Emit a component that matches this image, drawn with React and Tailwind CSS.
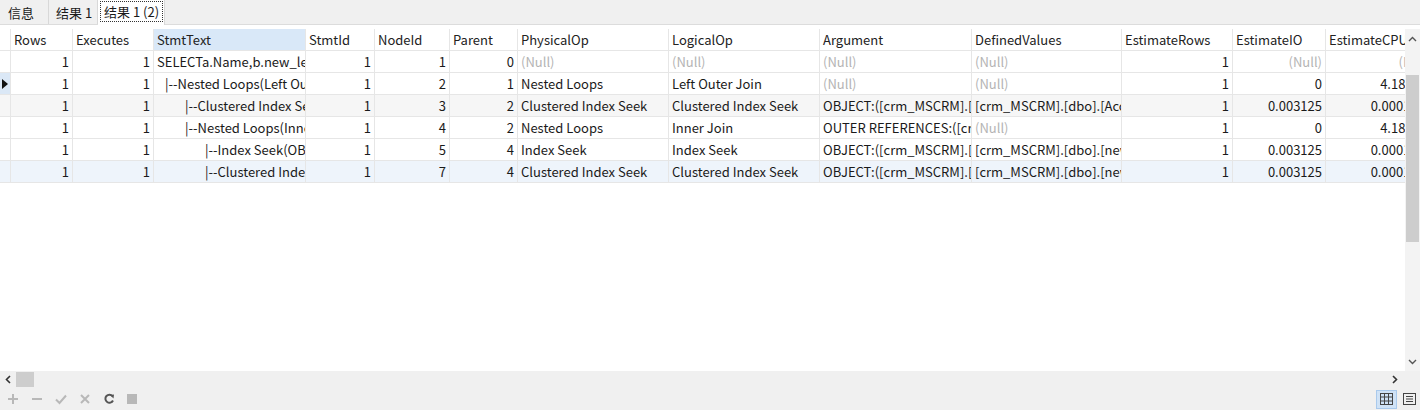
import React from "react";

const cols = "grid-cols-[11px_62px_81px_152px_69px_75px_68px_151px_151px_152px_150px_111px_93px_110px]";

const headers = ["Rows","Executes","StmtText","StmtId","NodeId","Parent","PhysicalOp","LogicalOp","Argument","DefinedValues","EstimateRows","EstimateIO","EstimateCPU"];

const N = null;
const rows = [
  { ind: 0, cells: [1,1,"SELECTa.Name,b.new_level,c.new_name",1,1,0,N,N,N,N,1,N,N] },
  { ind: 8, cells: [1,1,"|--Nested Loops(Left Outer Join)",1,2,1,"Nested Loops","Left Outer Join",N,N,1,"0","4.18E-06"], cur: true },
  { ind: 28, cells: [1,1,"|--Clustered Index Seek(OBJECT",1,3,2,"Clustered Index Seek","Clustered Index Seek","OBJECT:([crm_MSCRM].[dbo]","[crm_MSCRM].[dbo].[AccountBase]",1,"0.003125","0.0001581"], bg: "bg-[#f6f6f6]" },
  { ind: 28, cells: [1,1,"|--Nested Loops(Inner Join)",1,4,2,"Nested Loops","Inner Join","OUTER REFERENCES:([crm",N,1,"0","4.18E-06"] },
  { ind: 48, cells: [1,1,"|--Index Seek(OBJECT",1,5,4,"Index Seek","Index Seek","OBJECT:([crm_MSCRM].[dbo]","[crm_MSCRM].[dbo].[new_",1,"0.003125","0.0001581"] },
  { ind: 48, cells: [1,1,"|--Clustered Index Seek",1,7,4,"Clustered Index Seek","Clustered Index Seek","OBJECT:([crm_MSCRM].[dbo]","[crm_MSCRM].[dbo].[new_",1,"0.003125","0.0001581"], bg: "bg-[#eef4fb]" },
];

const numericCols = [0,1,3,4,5,10,11,12];

function Cell({ v, i, ind }) {
  const num = numericCols.includes(i);
  const align = num ? "text-right pl-[3px] pr-[3px]" : "text-left pl-[3px] pr-0";
  if (v === null) {
    return (
      <div className={`border-r border-b border-[#e6e6e6] overflow-hidden whitespace-nowrap text-[#b4b4b4] ${align}`}>(Null)</div>
    );
  }
  return (
    <div
      className={`border-r border-b border-[#e6e6e6] overflow-hidden whitespace-nowrap text-[#1a1a1a] ${align}`}
      style={i === 2 ? { paddingLeft: 3 + ind } : undefined}
    >
      {v}
    </div>
  );
}

export default function App() {
  return (
    <div className="w-[1420px] h-[410px] bg-white flex flex-col overflow-hidden text-[13px] leading-[21px]" style={{ fontFamily: '"Noto Sans CJK SC", "Noto Sans", sans-serif' }}>
      {/* tab bar */}
      <div className="h-[25px] bg-[#f0f0f0] flex items-end border-b border-[#dcdcdc] shrink-0">
        <div className="h-[24px] w-[49px] border-r border-[#d8d8d8] flex items-center pl-[8px] text-[#1a1a1a]">信息</div>
        <div className="h-[24px] w-[49px] border-r border-[#d8d8d8] flex items-center pl-[7px] text-[#1a1a1a]">结果 1</div>
        <div className="h-[25px] w-[67px] bg-white -mb-px flex items-start pt-[1px] pl-[2px] border-r border-[#d8d8d8]">
          <div className="h-[21px] w-[63px] border border-dotted border-[#333] flex items-center pl-[3px] text-[#1a1a1a]">结果 1 (2)</div>
        </div>
      </div>
      <div className="h-[4px] shrink-0" />
      {/* grid area */}
      <div className="flex flex-1 min-h-0">
        <div className="w-[1405px] overflow-hidden">
          <div className={`grid ${cols} h-[22px] w-max`}>
            <div className="border-r border-b border-[#e6e6e6]" />
            {headers.map((h) => (
              <div key={h} className={`border-r border-b border-[#e6e6e6] pl-[3px] whitespace-nowrap overflow-hidden text-[#222] ${h === "StmtText" ? "bg-[#d9e8f8]" : ""}`}>{h}</div>
            ))}
          </div>
          {rows.map((r, ri) => (
            <div key={ri} className={`grid ${cols} h-[22px] w-max ${r.bg || ""}`}>
              <div className={`border-r border-b border-[#e6e6e6] flex items-center justify-center ${r.cur ? "bg-[#dbe8f6]" : ""}`}>
                {r.cur && (
                  <svg width="6" height="10" viewBox="0 0 6 10"><path d="M0 0 L6 5 L0 10 Z" fill="#111" /></svg>
                )}
              </div>
              {r.cells.map((v, i) => (
                <Cell key={i} v={v} i={i} ind={r.ind} />
              ))}
            </div>
          ))}
        </div>
        {/* vertical scrollbar */}
        <div className="w-[15px] bg-[#f3f3f3] flex flex-col items-center">
          <div className="h-[20px] flex items-center justify-center">
            <svg width="9" height="6" viewBox="0 0 9 6"><path d="M1 5 L4.5 1.5 L8 5" stroke="#555" strokeWidth="1.4" fill="none" /></svg>
          </div>
          <div className="h-[26px]" />
          <div className="w-[13px] h-[167px] bg-[#cdcdcd]" />
          <div className="flex-1" />
          <div className="h-[18px] flex items-center justify-center">
            <svg width="9" height="6" viewBox="0 0 9 6"><path d="M1 1 L4.5 4.5 L8 1" stroke="#555" strokeWidth="1.4" fill="none" /></svg>
          </div>
        </div>
      </div>
      {/* horizontal scrollbar */}
      <div className="h-[17px] bg-[#f0f0f0] flex items-center shrink-0">
        <div className="w-[16px] flex items-center justify-center">
          <svg width="6" height="9" viewBox="0 0 6 9"><path d="M5 1 L1.5 4.5 L5 8" stroke="#333" strokeWidth="1.6" fill="none" /></svg>
        </div>
        <div className="w-[18px] h-[15px] bg-[#cdcdcd]" />
        <div className="flex-1" />
        <div className="w-[16px] flex items-center justify-center mr-[17px]">
          <svg width="6" height="9" viewBox="0 0 6 9"><path d="M1 1 L4.5 4.5 L1 8" stroke="#333" strokeWidth="1.6" fill="none" /></svg>
        </div>
      </div>
      {/* bottom toolbar */}
      <div className="h-[22px] bg-[#f0f0f0] flex items-center shrink-0 pl-[7px]">
        <div className="flex items-center gap-[12px]">
          <svg width="12" height="12" viewBox="0 0 12 12"><path d="M6 1 V11 M1 6 H11" stroke="#b8b8b8" strokeWidth="2" /></svg>
          <svg width="12" height="12" viewBox="0 0 12 12"><path d="M1 6 H11" stroke="#b8b8b8" strokeWidth="2" /></svg>
          <svg width="12" height="12" viewBox="0 0 12 12"><path d="M1 6.5 L4.5 10 L11 2.5" stroke="#b8b8b8" strokeWidth="2" fill="none" /></svg>
          <svg width="12" height="12" viewBox="0 0 12 12"><path d="M2 2 L10 10 M10 2 L2 10" stroke="#b8b8b8" strokeWidth="2" /></svg>
          <svg width="12" height="12" viewBox="0 0 12 12"><path d="M9.5 3.2 A4 4 0 1 0 10 7.5" stroke="#555" strokeWidth="2" fill="none" /><path d="M7 2 L11 1.5 L10.5 5.5 Z" fill="#555" /></svg>
          <div className="w-[10px] h-[10px] bg-[#b8b8b8]" />
        </div>
        <div className="flex-1" />
        <div className="w-[21px] h-[19px] bg-[#cfe2f6] border border-[#a9c9ec] flex items-center justify-center mr-[3px]">
          <svg width="13" height="12" viewBox="0 0 13 12"><rect x="0.5" y="0.5" width="12" height="11" fill="none" stroke="#444" /><path d="M0.5 4 H12.5 M0.5 8 H12.5 M4.5 0.5 V11.5 M8.5 0.5 V11.5" stroke="#444" /></svg>
        </div>
        <div className="w-[18px] h-[19px] flex items-center justify-center mr-[2px]">
          <svg width="13" height="12" viewBox="0 0 13 12"><rect x="0.5" y="0.5" width="12" height="11" fill="none" stroke="#444" /><path d="M3 3.5 H10 M3 6 H10 M3 8.5 H10" stroke="#444" /></svg>
        </div>
      </div>
    </div>
  );
}
